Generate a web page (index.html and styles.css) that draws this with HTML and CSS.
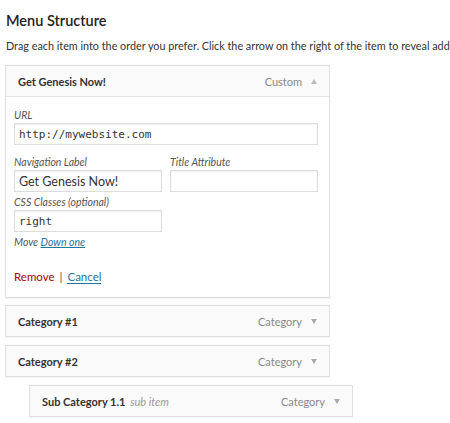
FILE: index.html
```html
<!DOCTYPE html>
<html>
<head>
<meta charset="utf-8">
<link rel="stylesheet" href="styles.css">
</head>
<body>
<div class="page">
  <h2 class="title">Menu Structure</h2>
  <p class="desc">Drag each item into the order you prefer. Click the arrow on the right of the item to reveal additional configuration options.</p>
  <ul class="menu">
    <li class="item open">
      <div class="bar">
        <span class="name">Get Genesis Now!</span>
        <span class="type">Custom</span>
        <span class="arrow up"></span>
      </div>
      <div class="settings">
        <label class="field">
          <span class="lbl">URL</span>
          <input class="inp mono wide" type="text" value="http://mywebsite.com">
        </label>
        <div class="row">
          <label class="field half">
            <span class="lbl">Navigation Label</span>
            <input class="inp" type="text" value="Get Genesis Now!">
          </label>
          <label class="field half">
            <span class="lbl">Title Attribute</span>
            <input class="inp" type="text" value="">
          </label>
        </div>
        <label class="field half css">
          <span class="lbl">CSS Classes (optional)</span>
          <input class="inp mono" type="text" value="right">
        </label>
        <div class="move">Move <a class="link" href="#">Down one</a></div>
        <div class="actions"><a class="remove" href="#">Remove</a><span class="sep">|</span><a class="cancel" href="#">Cancel</a></div>
      </div>
    </li>
    <li class="item">
      <div class="bar">
        <span class="name">Category #1</span>
        <span class="type">Category</span>
        <span class="arrow down"></span>
      </div>
    </li>
    <li class="item">
      <div class="bar">
        <span class="name">Category #2</span>
        <span class="type">Category</span>
        <span class="arrow down"></span>
      </div>
    </li>
    <li class="item sub">
      <div class="bar">
        <span class="name">Sub Category 1.1 <em class="subtag">sub item</em></span>
        <span class="type">Category</span>
        <span class="arrow down"></span>
      </div>
    </li>
  </ul>
</div>
</body>
</html>
```
FILE: styles.css
```css
* { box-sizing: border-box; }
html, body { margin: 0; padding: 0; background: #fff; overflow: hidden; }
body { font-family: Lato, "Open Sans", sans-serif; color: #333; width: 450px; }
.page { padding: 0 0 0 5px; }
.title { margin: 0; padding: 11px 0 0 1px; font-size: 14.5px; font-weight: 600; line-height: 20px; color: #222; }
.desc { margin: 8px 0 0 1px; font-size: 10.8px; line-height: 14px; color: #333; white-space: nowrap; overflow: hidden; width: 444px; }
.menu { list-style: none; margin: 12px 0 0 0; padding: 0; }
.item { width: 325px; margin-bottom: 8px; border: 1px solid #dfdfdf; background: #fafafa; box-shadow: 0 1px 1px rgba(0,0,0,0.04); }
.item.open { margin-bottom: 7px; }
.item.sub { margin-left: 24px; width: 324px; }
.bar { height: 30px; display: flex; align-items: center; padding: 0 12px 0 12px; }
.item.open .bar { border-bottom: 1px solid #e4e4e4; height: 31px; }
.name { flex: 1; font-size: 11px; font-weight: 700; color: #333; }
.subtag { font-weight: 400; color: #999; font-style: italic; margin-left: 2px; }
.type { font-size: 11px; color: #888; margin-right: 9px; }
.arrow { width: 0; height: 0; border-left: 3.5px solid transparent; border-right: 3.5px solid transparent; }
.arrow.up { border-bottom: 5px solid #bbb; }
.arrow.down { border-top: 5px solid #aaa; }
.settings { background: #fff; padding: 12px 10px 13px 8px; }
.field { display: block; }
.lbl { display: block; font-size: 10.5px; font-style: italic; color: #555; line-height: 13px; margin-bottom: 1px; }
.inp { display: block; height: 22px; border: 1px solid #ddd; box-shadow: inset 0 1px 2px rgba(0,0,0,0.07); background: #fff; font-family: Lato, "Open Sans", sans-serif; font-size: 12.5px; color: #333; padding: 0 4px; margin: 0; width: 148px; outline: none; }
.inp.wide { width: 304px; }
.inp.mono { font-family: "DejaVu Sans Mono", "Liberation Mono", monospace; font-size: 11px; }
.row { display: flex; gap: 8px; margin-top: 11px; }
.half { width: 148px; }
.css { margin-top: 4px; }
.move { margin-top: 4px; font-size: 10.5px; line-height: 13px; font-style: italic; color: #555; }
.link { color: #21759b; text-decoration: underline; }
.actions { margin-top: 20px; font-size: 11.5px; line-height: 15px; }
.remove { color: #a00; text-decoration: none; }
.sep { color: #555; margin: 0 5px; }
.cancel { color: #21759b; text-decoration: none; border-bottom: 1px solid #21759b; }
```
